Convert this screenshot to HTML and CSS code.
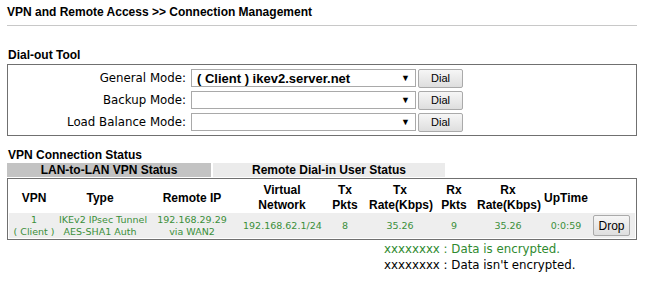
FILE: index.html
```html
<!DOCTYPE html>
<html lang="en">
<head>
    <meta charset="UTF-8">
    <title>VPN and Remote Access - Connection Management</title>
    <link rel="stylesheet" href="styles.css">
</head>
<body>
    <div class="page">
        <div class="page-title">VPN and Remote Access &gt;&gt; Connection Management</div>

        <!-- Dial-out -->
        <div class="section-title dial-title">Dial-out Tool</div>
        <div class="dial-box">
            <div class="dial-row">
                <span class="dial-label">General Mode:</span>
                <div class="fake-select"><span class="sel-text">( Client ) ikev2.server.net</span><span class="sel-arrow">&#9660;</span></div>
                <button class="btn dial-btn">Dial</button>
            </div>
            <div class="dial-row">
                <span class="dial-label">Backup Mode:</span>
                <div class="fake-select"><span class="sel-text"></span><span class="sel-arrow">&#9660;</span></div>
                <button class="btn dial-btn">Dial</button>
            </div>
            <div class="dial-row">
                <span class="dial-label">Load Balance Mode:</span>
                <div class="fake-select"><span class="sel-text"></span><span class="sel-arrow">&#9660;</span></div>
                <button class="btn dial-btn">Dial</button>
            </div>
        </div>

        <!-- Status -->
        <div class="section-title status-title">VPN Connection Status</div>
        <div class="tabs">
            <div class="tab tab-active">LAN-to-LAN VPN Status</div>
            <div class="tab">Remote Dial-in User Status</div>
        </div>
        <div class="status-box">
            <table class="status-table">
                <colgroup>
                    <col style="width:50px"><col style="width:82px"><col style="width:102px"><col style="width:78px">
                    <col style="width:48px"><col style="width:62px"><col style="width:46px"><col style="width:62px">
                    <col style="width:54px"><col style="width:42px">
                </colgroup>
                <tr class="head-row">
                    <th>VPN</th>
                    <th>Type</th>
                    <th>Remote IP</th>
                    <th>Virtual<br>Network</th>
                    <th>Tx<br>Pkts</th>
                    <th>Tx<br>Rate(Kbps)</th>
                    <th>Rx<br>Pkts</th>
                    <th>Rx<br>Rate(Kbps)</th>
                    <th>UpTime</th>
                    <th></th>
                </tr>
                <tr class="data-row">
                    <td>1<br>( Client )</td>
                    <td>IKEv2 IPsec Tunnel<br>AES-SHA1 Auth</td>
                    <td>192.168.29.29<br>via WAN2</td>
                    <td>192.168.62.1/24</td>
                    <td>8</td>
                    <td>35.26</td>
                    <td>9</td>
                    <td>35.26</td>
                    <td>0:0:59</td>
                    <td class="drop-cell"><button class="btn drop-btn">Drop</button></td>
                </tr>
            </table>
        </div>

        <div class="legend">
            <div class="legend-green">xxxxxxxx : Data is encrypted.</div>
            <div>xxxxxxxx : Data isn't encrypted.</div>
        </div>
    </div>
</body>
</html>
```

FILE: styles.css
```css
body {
    margin: 0;
    font-family: 'Liberation Sans', Arial, sans-serif;
    background-color: #fff;
    color: #000;
}
.page {
    width: 630px;
    padding: 0 7px;
}
.page-title {
    font-size: 12px;
    font-weight: bold;
    line-height: 14px;
    padding: 5px 0 6px 0;
    border-bottom: 1px solid #c8c8c8;
}
.section-title {
    font-size: 12px;
    font-weight: bold;
    line-height: 14px;
    padding-left: 1px;
}
.dial-title {
    margin-top: 22px;
    margin-bottom: 2px;
}
.dial-box {
    border: 1px solid #707070;
    padding: 2px 0;
}
.dial-row {
    display: flex;
    align-items: center;
    height: 22px;
}
.dial-label {
    width: 178px;
    text-align: right;
    padding-right: 5px;
    font-family: 'DejaVu Sans', Tahoma, sans-serif;
    font-size: 11.8px;
}
.fake-select {
    display: flex;
    align-items: center;
    justify-content: space-between;
    width: 214px;
    height: 16px;
    border: 1px solid #a9a9a9;
    background-color: #fff;
    padding: 0 5px 0 4px;
    box-sizing: content-box;
    margin-right: 2px;
}
.sel-text {
    font-size: 13px;
    font-weight: bold;
    padding-left: 1px;
}
.sel-arrow {
    font-size: 9px;
    color: #000;
}
.btn {
    font-family: 'Liberation Sans', Arial, sans-serif;
    background: linear-gradient(#f6f6f6 0%, #dedede 100%);
    border: 1px solid #aaa;
    border-radius: 2px;
    color: #000;
    padding: 0;
    cursor: pointer;
}
.dial-btn {
    width: 45px;
    height: 19px;
    font-size: 11px;
}
.status-title {
    margin-top: 12px;
    line-height: 14px;
}
.tabs {
    display: flex;
    gap: 2px;
    margin-top: 1px;
}
.tab {
    font-size: 12px;
    font-weight: bold;
    line-height: 14px;
    text-align: center;
    background-color: #ebebeb;
    width: 232px;
}
.tab-active {
    background-color: #c3c3c3;
    width: 204px;
}
.status-box {
    border: 1px solid #707070;
    margin-top: 1px;
    padding: 1px;
}
.status-table {
    border-collapse: collapse;
    table-layout: fixed;
    width: 626px;
}
.head-row th {
    font-size: 12px;
    font-weight: bold;
    line-height: 15px;
    height: 32px;
    padding: 3px 0 0 0;
    box-sizing: border-box;
    vertical-align: middle;
    white-space: nowrap;
}
.data-row td {
    background-color: #eeeeee;
    color: #3a8f3a;
    font-family: 'DejaVu Sans', Tahoma, sans-serif;
    font-size: 9.5px;
    line-height: 12px;
    text-align: center;
    height: 25px;
    padding: 0;
    white-space: nowrap;
}
.data-row td.drop-cell {
    text-align: left;
}
.drop-btn {
    width: 37px;
    height: 21px;
    font-size: 12px;
}
.legend {
    margin-left: 377px;
    margin-top: 1px;
    font-family: 'DejaVu Sans', Tahoma, sans-serif;
    font-size: 11.8px;
    line-height: 16px;
}
.legend-green {
    color: #2f8a2f;
}
```
